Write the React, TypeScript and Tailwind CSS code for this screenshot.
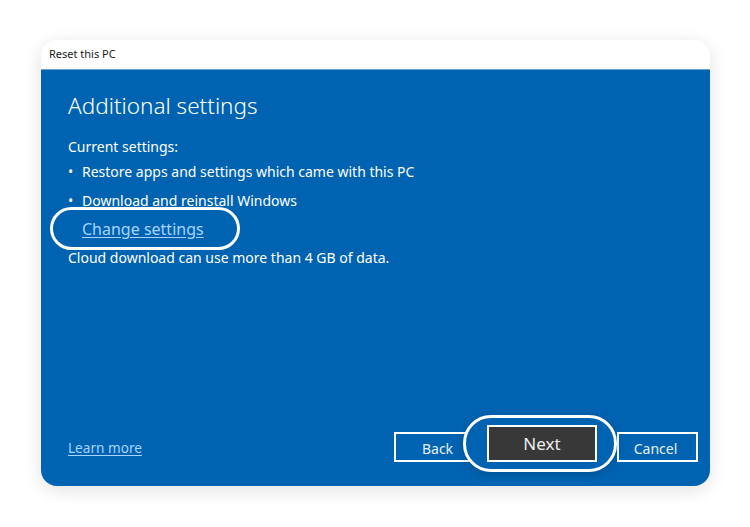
import React from 'react';

const font = { fontFamily: '"Noto Sans", "Open Sans", sans-serif' };

export default function App() {
  return (
    <div className="w-[750px] h-[527px] bg-white pt-[40px] pl-[41px]" style={font}>
      <div className="w-[669px] h-[446px] rounded-[16px] overflow-hidden flex flex-col shadow-[0_4px_18px_rgba(0,0,0,0.12)]">
        {/* Title bar */}
        <div className="h-[30px] bg-white flex items-center pl-[8px] border-b border-[#6ea2d0]">
          <span className="text-[11px] text-[#1a1a1a]">Reset this PC</span>
        </div>

        {/* Body */}
        <div className="flex-1 bg-[#0063b1] flex flex-col pl-[27px] pr-[12px] pt-[21px] pb-[24px] text-white">
          <h1 className="text-[22.5px] font-light leading-[30px]">Additional settings</h1>
          <p className="text-[14px] mt-[16px] leading-[20px]">Current settings:</p>
          <ul className="text-[14px] leading-[20px]">
            <li className="flex mt-[5px]">
              <span className="w-[14px]">•</span>Restore apps and settings which came with this PC
            </li>
            <li className="flex mt-[9px]">
              <span className="w-[14px]">•</span>Download and reinstall Windows
            </li>
          </ul>
          <div className="relative mt-[9px] h-[20px]">
            <div className="absolute left-[-18px] top-[-13px] w-[190px] h-[43px] rounded-[22px] border-[3px] border-white" />
            <a className="absolute left-[14px] top-[-1px] text-[16px] leading-[20px] text-[#a6d4ff] underline underline-offset-2">
              Change settings
            </a>
          </div>
          <p className="text-[14px] mt-[8px] leading-[20px]">Cloud download can use more than 4 GB of data.</p>

          <div className="flex-1" />

          <div className="flex items-end">
            <a className="text-[13.6px] leading-[20px] text-[#a6d4ff] underline underline-offset-2 mb-[4px]">Learn more</a>
            <div className="flex-1" />
            <div className="relative flex items-end">
              <button className="w-[81px] h-[30px] border-2 border-white text-[14px] text-[#e8f0f8] pt-[2px] pl-[6px]">Back</button>
              <div className="relative ml-[12px]">
                <div className="absolute left-[-24px] top-[-10px] w-[154px] h-[57px] rounded-[28px] border-[3px] border-white bg-[#0063b1] shadow-[0_2px_8px_rgba(0,0,0,0.2)]" />
                <button className="relative w-[110px] h-[37px] bg-[#383838] border-2 border-white text-[17px] text-[#eeeeee]">Next</button>
              </div>
              <button className="ml-[20px] w-[81px] h-[30px] border-2 border-white text-[14px] text-[#e8f0f8] pt-[2px] pr-[4px]">Cancel</button>
            </div>
          </div>
        </div>
      </div>
    </div>
  );
}
